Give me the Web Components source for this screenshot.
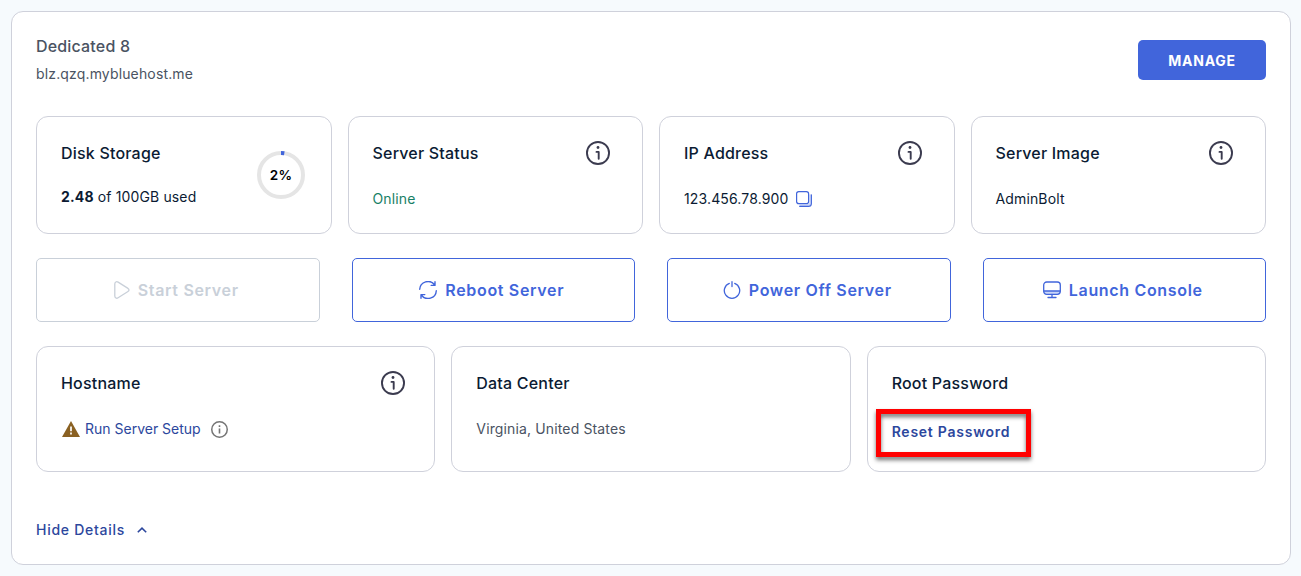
<!DOCTYPE html>
<html lang="en">
<head>
<meta charset="utf-8">
<title>Server details</title>
<style>
  body { margin: 0; background: #f6fafd; font-family: Inter, "Liberation Sans", sans-serif; color: #0b1b33; }
</style>
</head>
<body>
<server-panel>
  <span slot="name">Dedicated 8</span>
  <span slot="host">blz.qzq.mybluehost.me</span>
  <manage-button slot="manage">MANAGE</manage-button>

  <card-row columns="4">
    <stat-card>
      <span slot="title">Disk Storage</span>
      <disk-usage slot="value"><b slot="used">2.48</b> of 100GB used</disk-usage>
      <usage-ring slot="aside">2%</usage-ring>
    </stat-card>
    <stat-card info>
      <span slot="title">Server Status</span>
      <status-text slot="value">Online</status-text>
    </stat-card>
    <stat-card info>
      <span slot="title">IP Address</span>
      <ip-value slot="value">123.456.78.900</ip-value>
    </stat-card>
    <stat-card info>
      <span slot="title">Server Image</span>
      <span slot="value">AdminBolt</span>
    </stat-card>
  </card-row>

  <card-row columns="4" wide>
    <action-button icon="play" disabled>Start Server</action-button>
    <action-button icon="reboot">Reboot Server</action-button>
    <action-button icon="power">Power Off Server</action-button>
    <action-button icon="console">Launch Console</action-button>
  </card-row>

  <card-row columns="3">
    <stat-card info tall>
      <span slot="title">Hostname</span>
      <setup-link slot="value">Run Server Setup</setup-link>
    </stat-card>
    <stat-card tall>
      <span slot="title">Data Center</span>
      <muted-text slot="value">Virginia, United States</muted-text>
    </stat-card>
    <stat-card tall>
      <span slot="title">Root Password</span>
      <reset-link slot="value">Reset Password</reset-link>
    </stat-card>
  </card-row>

  <details-toggle slot="footer">Hide Details</details-toggle>
</server-panel>

<script>
const define = (name, html, setup) => {
  const template = document.createElement('template');
  template.innerHTML = html;
  customElements.define(name, class extends HTMLElement {
    constructor() {
      super();
      this.attachShadow({ mode: 'open' }).append(template.content.cloneNode(true));
    }
    connectedCallback() { if (setup) setup(this, this.shadowRoot); }
  });
};

define('server-panel', `
  <style>
    :host { display: flex; flex-direction: column; gap: 24px; box-sizing: border-box; width: 1280px; height: 554px;
      margin: 11px 10px 11px 11px; padding: 24px; background: #fff; border: 1px solid #cfd1db; border-radius: 12px; }
    header { display: flex; justify-content: space-between; align-items: flex-start; height: 56px; }
    .names { display: flex; flex-direction: column; gap: 8px; color: #4a5362; }
    .name { font: 500 16px/20px Inter, sans-serif; letter-spacing: .17px; }
    .host { font: 400 14px/20px Inter, sans-serif; letter-spacing: .15px; }
    footer { padding-top: 24px; }
  </style>
  <header>
    <div class="names"><div class="name"><slot name="name"></slot></div><div class="host"><slot name="host"></slot></div></div>
    <slot name="manage"></slot>
  </header>
  <slot></slot>
  <footer><slot name="footer"></slot></footer>`);

define('manage-button', `
  <style>
    :host { display: flex; align-items: center; justify-content: center; box-sizing: border-box; width: 128px; height: 40px; margin-top: 4px;
      padding-top: 2px; background: #4165db; color: #fff; border-radius: 5px; font: 700 14px/20px Inter, sans-serif; letter-spacing: .75px; }
  </style><slot></slot>`);

define('card-row', `
  <style>
    :host { display: grid; grid-template-columns: repeat(var(--cols), minmax(0, 1fr)); gap: 16px; }
    :host([wide]) { gap: 32px; }
    :host([columns="4"]) { --cols: 4; }
    :host([columns="3"]) { --cols: 3; }
  </style><slot></slot>`);

define('info-icon', `
  <style>:host { display: block; width: 24px; height: 24px; } svg { display: block; }</style>
  <svg width="24" height="24" viewBox="0 0 24 24" fill="none" stroke="#3b3b4f" stroke-width="1.9">
    <circle cx="12" cy="12" r="11.05"/><path d="M10.5 10.900h2.200v6.800" stroke-linecap="round" stroke-linejoin="round"/>
    <circle cx="12" cy="6.500" r="1.400" fill="#3b3b4f" stroke="none"/>
  </svg>`);

define('stat-card', `
  <style>
    :host { display: flex; justify-content: space-between; box-sizing: border-box; height: 118px; padding: 24px;
      border: 1px solid #cfd1db; border-radius: 12px; background: #fff; }
    :host([tall]) { height: 126px; }
    .text { display: flex; flex-direction: column; gap: 24px; }
    .title { font: 500 16px/24px Inter, sans-serif; letter-spacing: .2px; }
    .value { font: 400 14px/20px Inter, sans-serif; letter-spacing: .14px; }
    info-icon { display: none; margin-right: 8px; }
    :host([tall]) info-icon { margin-right: 5px; }
    :host([info]) info-icon { display: block; }
  </style>
  <div class="text"><div class="title"><slot name="title"></slot></div><div class="value"><slot name="value"></slot></div></div>
  <slot name="aside"></slot><info-icon></info-icon>`);

define('disk-usage', `
  <style>:host { display: block; margin-top: -2px; } ::slotted(b) { font-weight: 700; }</style><slot name="used"></slot><slot></slot>`);

define('usage-ring', `
  <style>
    :host { display: grid; align-self: center; width: 48px; height: 48px; margin-right: 1.5px; color: #000; }
    svg, span { grid-area: 1 / 1; }
    span { align-self: center; justify-self: center; font: 600 13.5px/16px Inter, sans-serif; letter-spacing: .2px; }
  </style>
  <svg width="48" height="48" viewBox="0 0 48 48" fill="none" stroke-width="4">
    <circle cx="24" cy="24" r="22" stroke="#e5e5e5"/>
    <path d="M24 2a22 22 0 0 1 3.300 .25" stroke="#4165db"/>
  </svg><span><slot></slot></span>`);

define('status-text', `<style>:host { color: #178066; }</style><slot></slot>`);
define('muted-text', `<style>:host { color: #4a5362; }</style><slot></slot>`);

define('ip-value', `
  <style>:host { display: flex; align-items: center; gap: 7.5px; }</style><slot></slot>
  <svg width="16" height="16" viewBox="0 0 16 16" fill="none" stroke="#4165db" stroke-linecap="round">
    <path d="M4 14.300h7.500q2.800 0 2.800-2.800V4" stroke="#c9d5f8" stroke-width="1.600"/>
    <rect x=".6" y=".6" width="12" height="12" rx="2.200" stroke-width="1.200"/>
    <path d="M3.700 15.400h8.700q3 0 3-3V3.700" stroke-width="1.100"/>
  </svg>`);

const glyphs = {
  play: `<svg width="16" height="18" viewBox="0 0 16 18"><path d="M.8 3v12c0 1.900 1.700 2.800 3.300 1.800l9.500-6c1.900-1.200 1.900-2.500 0-3.700l-9.500-6C2.500 .1 .8 1.100 .8 3z" stroke-width="1.300"/></svg>`,
  reboot: `<svg width="18" height="18" viewBox="0 0 18 18" stroke-width="1.400" stroke-linecap="round" stroke-linejoin="round"><path d="M.7 8.300A8.200 8.200 0 0 1 15.600 4M16 .7v3.700h-3.800M17.300 9.700A8.200 8.200 0 0 1 2.400 14M2 17.300v-3.700h3.800"/></svg>`,
  power: `<svg width="18" height="18" viewBox="0 0 18 18" stroke-width="1.300" stroke-linecap="round"><path d="M6.300 2.400a7.700 7.700 0 1 0 5.400 0M9 .7v4.800"/></svg>`,
  console: `<svg width="18" height="18" viewBox="0 0 18 18" stroke-width="1.300" stroke-linecap="round"><path d="M1 10h16v1.500q0 2-2 2H3q-2 0-2-2z" fill="#c9d5f8" stroke="none"/><rect x=".7" y="1" width="16.600" height="12.300" rx="3"/><path d="M1 10h16M9 13.500v2.800M5 16.500h8"/></svg>`
};

define('action-button', `
  <style>
    :host { display: flex; align-items: center; justify-content: center; gap: 8px; box-sizing: border-box; height: 64px; padding-right: 3px;
      border: 1px solid #4165db; border-radius: 5px; color: #4165db; font: 600 16px/24px Inter, sans-serif; letter-spacing: .67px; }
    :host([disabled]) { color: #c9d0d9; border-color: #c9d0d9; }
    svg { display: block; fill: none; stroke: currentColor; }
  </style><i></i><slot></slot>`,
  (host, root) => { root.querySelector('i').innerHTML = glyphs[host.getAttribute('icon')]; });

define('setup-link', `
  <style>:host { display: flex; align-items: center; color: #2c479d; letter-spacing: 0; }
    .warn { margin: 0 5px 0 1px; } .info { margin-left: 10.500px; }</style>
  <svg class="warn" width="18" height="16" viewBox="0 0 18 16"><path d="M9 0l9 16H0z" fill="#8a6122"/><path d="M9 5.500v4.700M9 11.600v2" stroke="#fff" stroke-width="1.700"/></svg>
  <slot></slot>
  <svg class="info" width="17" height="17" viewBox="0 0 17 17" fill="none" stroke="#757575"><circle cx="8.500" cy="8.500" r="7.750" stroke-width="1.500"/><path d="M8.500 7.500v5M8.500 4.300v1.700" stroke-width="1.600"/></svg>`);

define('reset-link', `
  <style>
    :host { display: block; position: relative; margin-top: 3px; color: #2c479d; font-weight: 600; font-size: 14px; letter-spacing: .75px; }
    .mark { position: absolute; left: -16px; top: -13px; box-sizing: border-box; width: 155px; height: 48px; border: 5px solid #f00;
      filter: drop-shadow(0 3px 2px rgba(0,0,0,.55)); }
  </style><slot></slot><span class="mark"></span>`);

define('details-toggle', `
  <style>:host { display: flex; align-items: center; gap: 12px; height: 20px; color: #2c479d; font: 500 14px/20px Inter, sans-serif; letter-spacing: .72px; }</style>
  <slot></slot>
  <svg width="10" height="6" viewBox="0 0 10 6" fill="none" stroke="#2c479d" stroke-width="1.600"><path d="M.8 5.300L5 1.200l4.200 4.100"/></svg>`);
</script>
</body>
</html>
